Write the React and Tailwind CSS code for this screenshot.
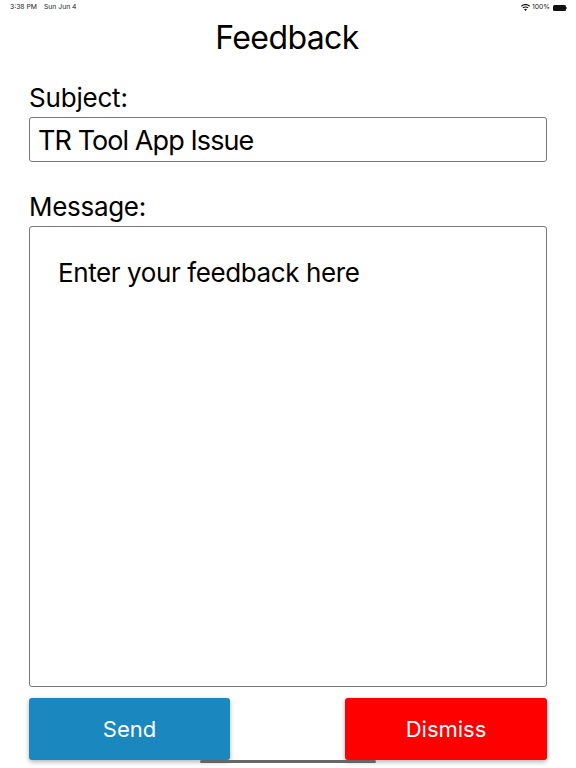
import React from "react";

function StatusBar() {
  return (
    <div className="flex items-center justify-between h-[14px] pt-[1px] pl-[10px] pr-[9px] text-[6.8px] text-[#222]">
      <div className="flex gap-[7px]">
        <span>3:38 PM</span>
        <span>Sun Jun 4</span>
      </div>
      <div className="flex items-center gap-[2px]">
        <svg width="9" height="7" viewBox="0 0 18 14" fill="#111">
          <path d="M9 14 L6 10.5 C7.8 9 10.2 9 12 10.5 Z M4.5 8.7 L3 7 C6.4 4 11.6 4 15 7 L13.5 8.7 C10.8 6.5 7.2 6.5 4.5 8.7 Z M1.5 5.3 L0 3.6 C5 -1 13 -1 18 3.6 L16.5 5.3 C12.2 1.5 5.8 1.5 1.5 5.3 Z" />
        </svg>
        <span>100%</span>
        <div className="flex items-center ml-px">
          <div className="w-[13px] h-[6px] rounded-[1.5px] bg-[#111]" />
          <div className="w-[1px] h-[2px] bg-[#777]" />
        </div>
      </div>
    </div>
  );
}

export default function App() {
  return (
    <div className="relative w-[576px] h-[768px] overflow-hidden bg-white text-black font-['Inter','Liberation_Sans',sans-serif]">
      <StatusBar />
      <h1 className="mt-[4px] pr-[2px] text-center text-[32px] leading-[40px] font-normal tracking-[-0.6px]">Feedback</h1>

      <div className="px-[29px]">
        <label className="block mt-[23px] text-[26px] leading-[34px] tracking-[-0.2px]">Subject:</label>
        <div className="mt-[2px] h-[45px] flex items-center pt-[3px] pl-[8px] pr-[9px] border border-[#777] rounded-[3px] text-[27px] tracking-[-0.92px]">
          TR Tool App Issue
        </div>

        <label className="block mt-[28px] text-[26px] leading-[34px] tracking-[-0.3px]">Message:</label>
        <div className="mt-[2px] h-[461px] pt-[29px] pl-[28px] pr-[29px] border border-[#777] rounded-[3px] text-[26px] leading-[34px] tracking-[-0.4px]">
          Enter your feedback here
        </div>

        <div className="mt-[11px] flex justify-between">
          <button className="w-[201px] h-[62px] rounded-[3px] bg-[#1a87bf] text-white text-[22px] shadow-[0_2px_5px_rgba(0,0,0,0.3)]">
            Send
          </button>
          <button className="w-[202px] h-[62px] rounded-[3px] bg-[#ff0000] text-white text-[22px] shadow-[0_2px_5px_rgba(0,0,0,0.3)]">
            Dismiss
          </button>
        </div>
      </div>

      <div className="absolute left-[200px] top-[760px] w-[176px] h-[3px] rounded-full bg-[#666]" />
    </div>
  );
}
